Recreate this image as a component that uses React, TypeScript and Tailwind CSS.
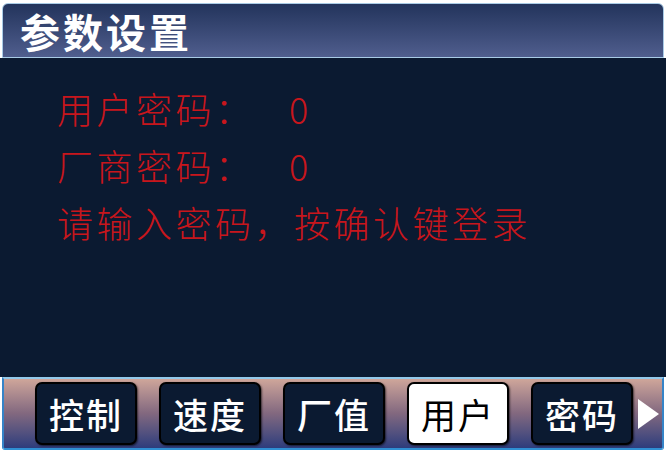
const tabs = [
  { label: "控制", active: false },
  { label: "速度", active: false },
  { label: "厂值", active: false },
  { label: "用户", active: true },
  { label: "密码", active: false },
];

export default function App() {
  return (
    <div className="flex h-[452px] w-[666px] flex-col overflow-hidden bg-white font-['Noto_Sans_CJK_SC',sans-serif]">
      <div className="mx-[2px] mt-[3px] flex h-[55px] items-center rounded-t-[6px] border border-[#a9cbe6] bg-linear-to-b from-[#23345c] to-[#505e8e] pl-[17px]">
        <span className="text-[40px] font-bold leading-none tracking-[3px] text-white">参数设置</span>
      </div>

      <div className="flex flex-1 flex-col bg-[#0b1a31] pl-[57px] pt-[22px] text-[36px] font-light leading-[57px] tracking-[3.5px] text-[#c8161c]">
        <div className="flex">
          <span className="w-[232px]">用户密码：</span>
          <span>0</span>
        </div>
        <div className="flex">
          <span className="w-[232px]">厂商密码：</span>
          <span>0</span>
        </div>
        <div>请输入密码，按确认键登录</div>
      </div>

      <div className="mx-[2px] mb-[2px] flex h-[73px] items-center gap-[22px] rounded-b-[3px] border-x-2 border-t-2 border-b-2 border-x-[#3584c8] border-t-[#93c9ea] border-b-[#2f8fd2] bg-linear-to-b from-[#cfa69a] via-[#82687f] to-[#2e3c7c] pl-[31px]">
        {tabs.map((t) => (
          <div
            key={t.label}
            className={
              t.active
                ? "flex h-[63px] w-[102px] items-center justify-center rounded-[7px] border-2 border-black bg-white text-[35px] leading-none tracking-[2px] text-black shadow-[1px_1px_2px_rgba(0,0,0,0.6)]"
                : "flex h-[63px] w-[102px] items-center justify-center rounded-[7px] border-2 border-black bg-[#0b1a31] text-[35px] font-medium leading-none tracking-[2px] text-white shadow-[1px_1px_2px_rgba(0,0,0,0.6)]"
            }
          >
            {t.label}
          </div>
        ))}
        <svg width="22" height="30" viewBox="0 0 22 30" className="-ml-[18px]">
          <polygon points="1,0 22,15 1,30" fill="#ffffff" />
        </svg>
      </div>
    </div>
  );
}
